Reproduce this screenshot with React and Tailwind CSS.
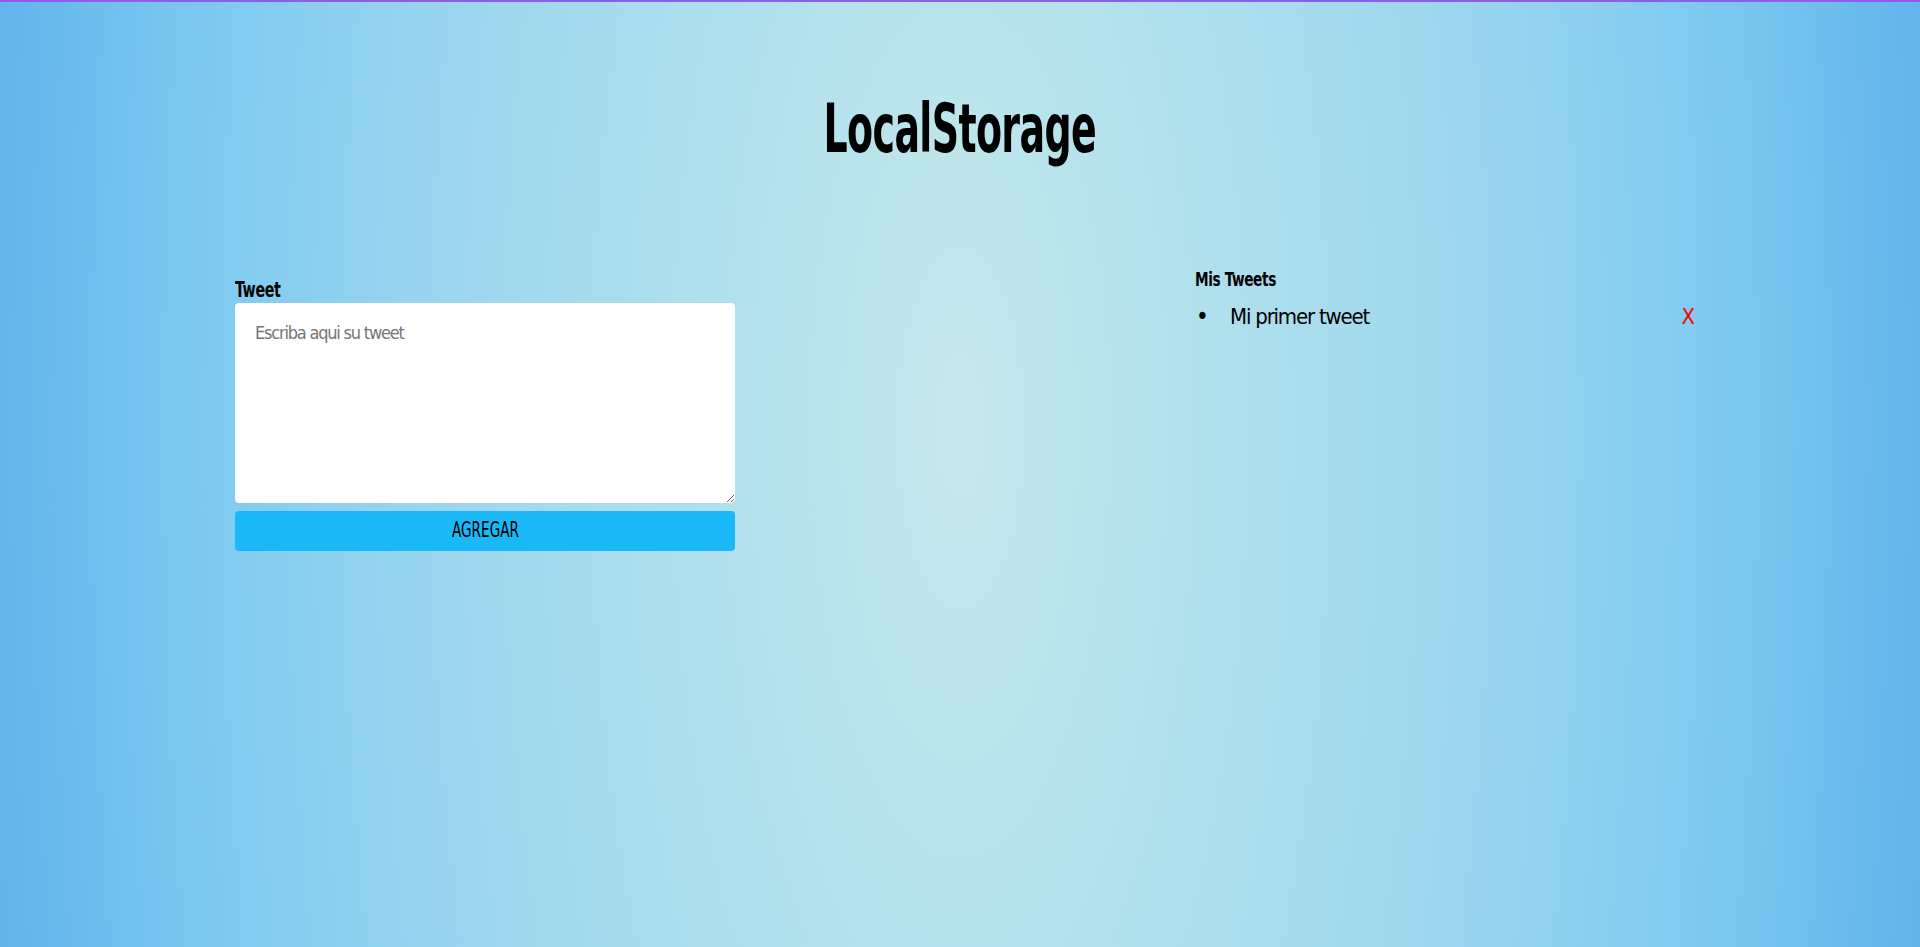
import { useState } from 'react';

const font = { fontFamily: '"Liberation Sans Narrow", "DejaVu Sans Condensed", "Roboto Condensed", "Liberation Sans", sans-serif' };

const App = () => {
  const [tweets] = useState(['Mi primer tweet']);

  return (
    <div
      className="min-h-screen border-t-2 border-[#8f5cf0] bg-[radial-gradient(ellipse_52%_300%_at_50%_45%,#c5e8eb_0%,#b0e0ed_25%,#9dd7ee_50%,#80caf1_75%,#5db3ea_100%)] text-black"
      style={font}
    >
      {/* title, narrowed to match the condensed face */}
      <div className="pt-[93px] text-center">
        <h1 className="inline-block origin-center scale-x-[0.62] text-[68px] font-bold leading-none tracking-[-1px]">
          LocalStorage
        </h1>
      </div>

      <div className="mx-auto mt-[105px] flex w-[1450px]">
        <div className="w-[960px] shrink-0 pt-[9px]">
          <label className="block origin-left scale-x-[0.72] text-[22px] font-bold leading-[26px] tracking-[-0.5px]">Tweet</label>
          <textarea
            className="block h-[200px] w-[500px] resize-y rounded bg-white px-5 py-4 text-[18px] tracking-[-1.2px] placeholder:text-[#757575] outline-none"
            placeholder="Escriba aqui su tweet"
          />
          <button className="mt-2 block h-10 w-[500px] rounded-sm bg-[#1ab8f6] text-[21px] uppercase">
            <span className="inline-block scale-x-[0.72]">Agregar</span>
          </button>
        </div>

        <div className="min-w-0 flex-1">
          <h2 className="origin-left scale-x-[0.76] text-[20px] font-bold leading-[22px] tracking-[-0.5px]">Mis Tweets</h2>
          <ul className="mt-[13px]">
            {tweets.map((tweet, i) => (
              <li key={i} className="flex w-[500px] items-center text-[22px] leading-[28px]">
                <span className="w-[35px] pl-[1px] text-[24px]">•</span>
                <span className="flex-1 tracking-[-1.2px]">{tweet}</span>
                <span className="text-[#ff0000]">X</span>
              </li>
            ))}
          </ul>
        </div>
      </div>
    </div>
  );
};

export default App;
